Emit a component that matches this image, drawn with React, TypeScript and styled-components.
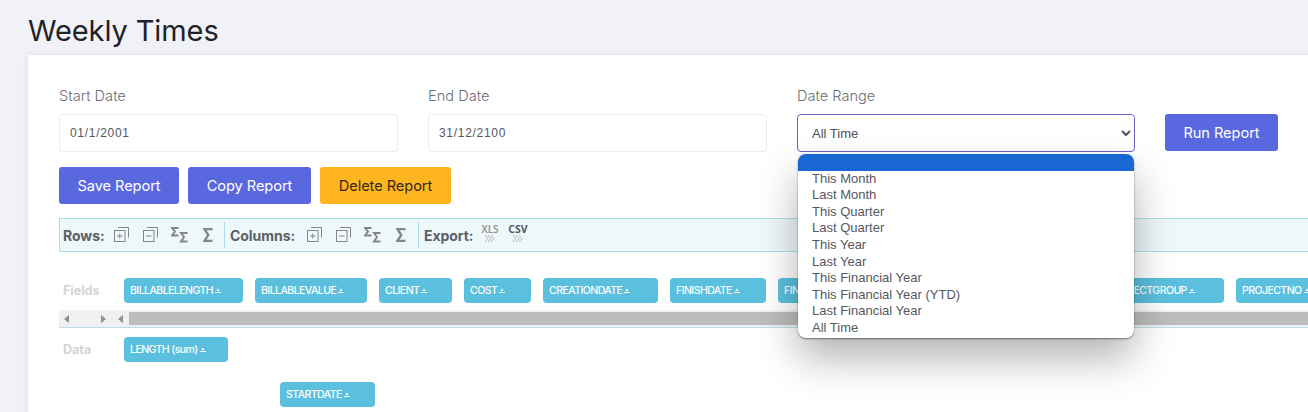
import React from 'react';
import styled, { createGlobalStyle } from 'styled-components';

const poppins = `Inter, "Noto Sans", sans-serif`;
const arial = `"Liberation Sans", Arial, sans-serif`;

const Global = createGlobalStyle`
  html, body { margin: 0; padding: 0; height: 412px; overflow: hidden; background: #f1f2f8; }
  * { box-sizing: border-box; }
`;
const Page = styled.div`
  width: 1308px; height: 412px; overflow: hidden; padding: 0 0 0 28px;
  font-family: ${poppins};
`;
const Title = styled.h1`
  margin: 0; height: 55px; padding-top: 13px; font-size: 29px; line-height: 36px; font-weight: 400;
  color: #1f2328; letter-spacing: -0.1px;
`;
const Card = styled.div`
  width: 1340px; height: 400px; background: #fff; padding: 31px 31px 0;
  box-shadow: 0 0 6px rgba(60, 60, 120, .12);
`;
const FormRow = styled.div`
  display: grid; grid-template-columns: 339px 339px 338px 113px; column-gap: 30px; align-items: start;
`;
const Field = styled.div`position: relative;`;
const Label = styled.label`
  display: block; height: 28px; font-size: 14.6px; line-height: 20px; color: #6d6d75; font-weight: 300;
`;
const TextInput = styled.input`
  display: block; width: 100%; height: 38px; border: 1px solid #ebecf2; border-radius: 3px; padding: 0 10px;
  font-family: ${arial}; font-size: 12px; letter-spacing: .7px; color: #55585e; background: #fff; outline: none;
`;
const Select = styled.select`
  display: block; width: 100%; height: 38px; border: 1px solid #6a5fc9; border-radius: 4px; padding: 0 10px;
  font-family: ${arial}; font-size: 13px; color: #50535a; background: #fff; outline: none;
`;
const Dropdown = styled.ul`
  position: absolute; z-index: 10; left: 1px; top: 68px; width: 336px; height: 184px; margin: 0; padding: 0;
  list-style: none; background: #fff; border-radius: 8px; overflow: hidden;
  box-shadow: 0 1px 2px rgba(0,0,0,.45), 0 20px 40px rgba(0,0,0,.3);
  font-family: ${arial}; font-size: 13px; color: #55585e;
`;
const Option = styled.li<{ $active?: boolean }>`
  height: 16.6px; line-height: 16.6px; padding-left: 14px; white-space: nowrap;
  background: ${p => p.$active ? '#1967d2' : 'transparent'};
`;
const Button = styled.button<{ $warn?: boolean; $w: number }>`
  width: ${p => p.$w}px; height: 37px; border: 0; border-radius: 3px; padding: 0;
  font-family: ${poppins}; font-size: 14.6px; font-weight: 400; letter-spacing: -.05px;
  background: ${p => p.$warn ? '#ffb51f' : '#5a68e0'}; color: ${p => p.$warn ? '#33291a' : '#fff'};
`;
const RunCell = styled.div`padding-top: 28px;`;
const Actions = styled.div`display: flex; gap: 9px; margin-top: 15px;`;
const Toolbar = styled.div`
  display: flex; align-items: center; height: 34px; margin-top: 14px; padding: 0 3px;
  background: #eef7fa; border: 1px solid #a9dfeb; border-right: 0;
`;
const ToolLabel = styled.b<{ $w: number }>`
  width: ${p => p.$w}px; flex: none; font-size: 14px; font-weight: 700; color: #5c6066; white-space: nowrap; letter-spacing: -.05px;
`;
const ToolIcon = styled.svg<{ $mr: number }>`
  display: block; flex: none; color: #858585; margin-right: ${p => p.$mr}px; margin-top: -1px;
`;
const Sep = styled.span`width: 1px; height: 26px; background: #a9dfeb; margin-right: 5px;`;
const ExportItem = styled.span<{ $dark?: boolean; $w: number; $mr: number }>`
  display: flex; flex-direction: column; align-items: center; width: ${p => p.$w}px; margin-right: ${p => p.$mr}px; margin-top: -6px;
  font-family: "Open Sans", sans-serif; font-size: ${p => p.$dark ? 10.5 : 10}px; line-height: 12px; font-weight: ${p => p.$dark ? 700 : 600};
  color: ${p => p.$dark ? '#55585e' : '#8a8d91'};
`;
const Pivot = styled.div`
  display: grid; grid-template-columns: 65px 1fr; margin-top: 26px;
`;
const RowLabel = styled.span`
  font-size: 12.5px; font-weight: 700; color: #d3d3d6; align-self: center; padding-left: 4px;
`;
const Chips = styled.div`display: flex; gap: 12px; height: 25px; overflow: hidden;`;
const Chip = styled.span<{ $w: number }>`
  flex: none; display: inline-flex; align-items: center; gap: 2px; width: ${p => p.$w}px; height: 25px; padding-left: 6px;
  background: #5bc0de; border-radius: 4px; color: #fff; font-size: 10.5px; font-weight: 500; white-space: nowrap; letter-spacing: -.55px;
`;
const Scroll = styled.div`
  display: flex; align-items: center; height: 18px; margin-top: 7px; background: #f1f1f1;
  border-bottom: 1px solid #b5e0e8; position: relative;
`;
const Thumb = styled.div`flex: 1; height: 13px; background: #bdbdbd; margin-bottom: 1px;`;
const Arrow = styled.svg<{ $mr: number }>`display: block; flex: none; color: #8f8f8f; margin-right: ${p => p.$mr}px;`;
const ScrollPad = styled.span`width: 5px; flex: none;`;
const DataRow = styled.div`display: grid; grid-template-columns: 65px 1fr; margin-top: 9px;`;
const ColChip = styled.div`margin: 20px 0 0 221px;`;

const SortMark = () => (
  <svg width="6" height="6" viewBox="0 0 6 6" fill="#fff"><path d="M3 0.5 4.6 3H1.4z" /><rect y="4" width="6" height="1" /></svg>
);
const SquareIcon = ({ minus, mr }: { minus?: boolean; mr: number }) => (
  <ToolIcon $mr={mr} width="15" height="15" viewBox="0 0 15 15" fill="none" stroke="currentColor" strokeWidth="1">
    <rect x=".5" y="3.5" width="10.5" height="11" />
    <path d="M4 .5H14.5V10.5" />
    <path d={minus ? 'M3 9h5.5' : 'M3 9h5.5M5.75 6.5v5'} />
  </ToolIcon>
);
const SigmaPair = ({ mr }: { mr: number }) => (
  <ToolIcon $mr={mr} width="17" height="16" viewBox="0 0 17 16" fill="none" stroke="currentColor" strokeWidth="1.9">
    <path d="M7.5 1H1l3 3.5L1 8.5h6.5" />
    <path d="M16.5 6H10l3 4-3 4.5h6.5" />
  </ToolIcon>
);
const Sigma = ({ mr }: { mr: number }) => (
  <ToolIcon $mr={mr} width="10" height="14" viewBox="0 0 10 14" fill="none" stroke="currentColor" strokeWidth="2.3">
    <path d="M9.5 1.2H1.5l3.8 5.8-3.8 5.8h8" />
  </ToolIcon>
);
const Chevrons = () => (
  <svg width="12" height="7" viewBox="0 0 12 7" fill="none" stroke="#b5b5b5" strokeWidth="1">
    <path d="M1 0l3 3.5-3 3.5M4 0l3 3.5-3 3.5M7 0l3 3.5-3 3.5" />
  </svg>
);
const ArrowL = ({ mr }: { mr: number }) => (
  <Arrow $mr={mr} width="5" height="8" viewBox="0 0 5 8" fill="currentColor"><path d="M5 0v8L0 4z" /></Arrow>
);
const ArrowR = ({ mr }: { mr: number }) => (
  <Arrow $mr={mr} width="5" height="8" viewBox="0 0 5 8" fill="currentColor"><path d="M0 0v8l5-4z" /></Arrow>
);

const options = ['This Month', 'Last Month', 'This Quarter', 'Last Quarter', 'This Year', 'Last Year', 'This Financial Year', 'This Financial Year (YTD)', 'Last Financial Year', 'All Time'];
const fields: [string, number][] = [
  ['BILLABLELENGTH', 119], ['BILLABLEVALUE', 112], ['CLIENT', 73], ['COST', 67], ['CREATIONDATE', 115], ['FINISHDATE', 96],
  ['FINISH', 96], ['LENGTH', 90], ['PROJECT', 102], ['PROJECTGROUP', 122], ['PROJECTNO', 110],
];

export default function App() {
  return (
    <Page>
      <Global />
      <Title>Weekly Times</Title>
      <Card>
        <FormRow>
          <Field><Label>Start Date</Label><TextInput defaultValue="01/1/2001" /></Field>
          <Field><Label>End Date</Label><TextInput defaultValue="31/12/2100" /></Field>
          <Field>
            <Label>Date Range</Label>
            <Select defaultValue="All Time"><option>All Time</option></Select>
            <Dropdown>
              <Option $active />
              {options.map(o => <Option key={o}>{o}</Option>)}
            </Dropdown>
          </Field>
          <RunCell><Button $w={113}>Run Report</Button></RunCell>
        </FormRow>
        <Actions>
          <Button $w={120}>Save Report</Button>
          <Button $w={123}>Copy Report</Button>
          <Button $w={131} $warn>Delete Report</Button>
        </Actions>
        <Toolbar>
          <ToolLabel $w={51}>Rows:</ToolLabel>
          <SquareIcon mr={14} /><SquareIcon minus mr={13} /><SigmaPair mr={15} /><Sigma mr={11} />
          <Sep />
          <ToolLabel $w={77}>Columns:</ToolLabel>
          <SquareIcon mr={14} /><SquareIcon minus mr={13} /><SigmaPair mr={15} /><Sigma mr={12} />
          <Sep />
          <ToolLabel $w={57}>Export:</ToolLabel>
          <ExportItem $w={18} $mr={9}>XLS<Chevrons /></ExportItem>
          <ExportItem $w={20} $mr={9} $dark>CSV<Chevrons /></ExportItem>
        </Toolbar>
        <Pivot>
          <RowLabel>Fields</RowLabel>
          <Chips>
            {fields.map(([f, w]) => <Chip key={f} $w={w}>{f}<SortMark /></Chip>)}
          </Chips>
        </Pivot>
        <Scroll>
          <ScrollPad />
          <ArrowL mr={32} /><ArrowR mr={12} /><ArrowL mr={6} />
          <Thumb />
        </Scroll>
        <DataRow>
          <RowLabel>Data</RowLabel>
          <Chips><Chip $w={104}>LENGTH (sum)<SortMark /></Chip></Chips>
        </DataRow>
        <ColChip><Chip $w={95}>STARTDATE<SortMark /></Chip></ColChip>
      </Card>
    </Page>
  );
}
